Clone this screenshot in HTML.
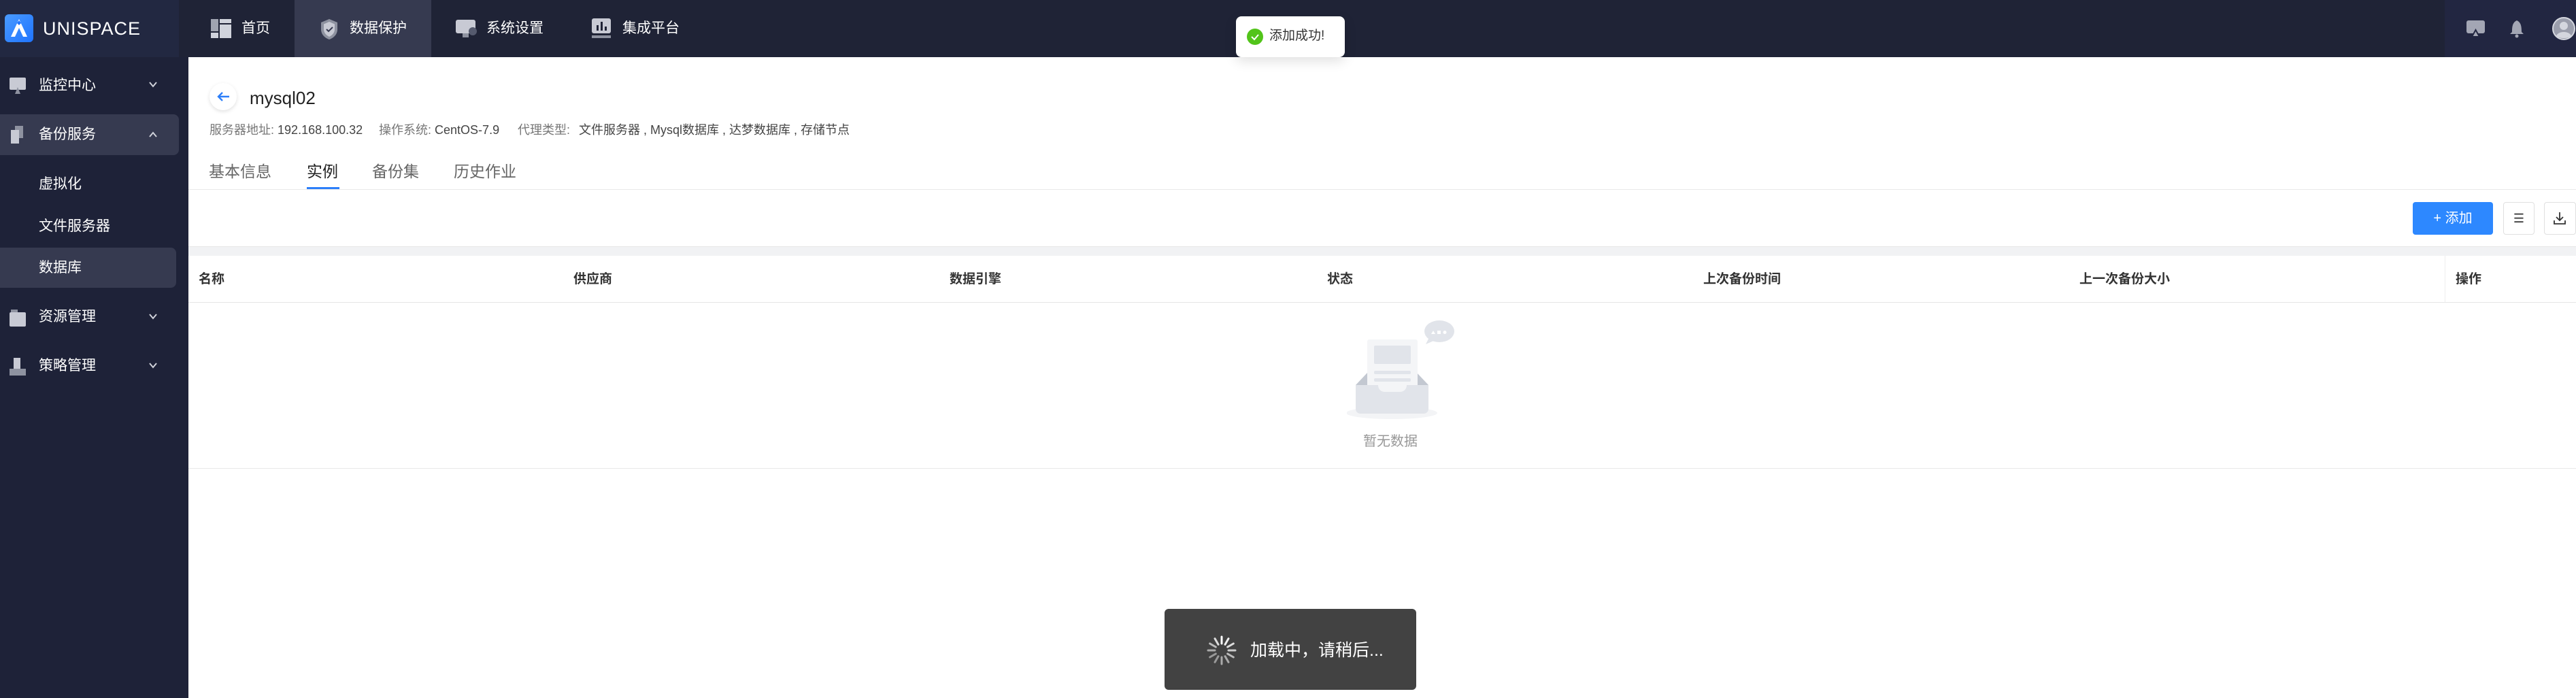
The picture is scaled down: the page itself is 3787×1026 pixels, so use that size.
<!DOCTYPE html>
<html><head><meta charset="utf-8">
<style>
*{margin:0;padding:0;box-sizing:border-box}
body{width:3787px;height:1026px;overflow:hidden;background:#fff;font-family:"Liberation Sans","Noto Sans CJK SC",sans-serif;position:relative}
.abs{position:absolute}
.top{left:0;top:0;width:3787px;height:84px;background:#1f2336}
.logo{left:0;top:0;width:263px;height:84px;background:#222841}
.side{left:0;top:84px;width:277px;height:942px;background:#1e2238}
.nav{color:#fff;font-size:21px;line-height:84px;top:0}
.si{color:#fff;font-size:21px;line-height:30px}
.hd{top:376px;font-size:19px;font-weight:bold;color:#333;line-height:69px}
.inf{top:180px;font-size:18px;line-height:22px;white-space:nowrap}
.lb{color:#777}.vl{color:#444}
</style></head><body>
<div class="abs top"></div>
<div class="abs logo"></div>
<div class="abs" style="left:7px;top:21px;width:42px;height:41px;border-radius:6px;background:linear-gradient(135deg,#4a9bff,#1f74ff)">
<svg width="42" height="41" viewBox="0 0 42 41"><path d="M21 7 L33 33 L27 33 L21 20 L15 33 L9 33 Z" fill="#fff"/><path d="M21 9 l3 4 -3 3 -3 -3z" fill="#1f74ff"/></svg></div>
<div class="abs" style="left:63px;top:24px;color:#fff;font-size:27px;line-height:36px;letter-spacing:1px">UNISPACE</div>
<div class="abs" style="left:433px;top:0;width:201px;height:84px;background:#363a50"></div>
<svg class="abs" style="left:310px;top:28px" width="30" height="28"><rect x="0" y="0" width="11" height="18" fill="#a0a4b0"/><rect x="0" y="20" width="11" height="8" fill="#d0d3dc"/><rect x="13" y="0" width="17" height="6" fill="#d0d3dc"/><rect x="13" y="8" width="17" height="20" fill="#d0d3dc"/></svg>
<div class="abs nav" style="left:355px">首页</div>
<svg class="abs" style="left:471px;top:27px" width="26" height="32"><path d="M13 1 L25 6 V16 C25 24 19 29 13 31 C7 29 1 24 1 16 V6 Z" fill="#8e92a0"/><path d="M13 5 L21 8.5 V16 C21 21.5 17 25 13 27 C9 25 5 21.5 5 16 V8.5Z" fill="#c8cad4"/><path d="M9 16 l3 3 6 -6" stroke="#363a50" stroke-width="2" fill="none"/></svg>
<div class="abs nav" style="left:514px">数据保护</div>
<svg class="abs" style="left:670px;top:29px" width="32" height="28"><rect x="0" y="0" width="29" height="20" rx="3" fill="#c8cad4"/><rect x="10" y="20" width="9" height="6" fill="#8e92a0"/><circle cx="25" cy="17" r="6" fill="#555a6e"/></svg>
<div class="abs nav" style="left:715px">系统设置</div>
<svg class="abs" style="left:870px;top:27px" width="28" height="30"><rect x="0" y="0" width="28" height="22" rx="3" fill="#c8cad4"/><rect x="7" y="10" width="3" height="8" fill="#1f2336"/><rect x="13" y="5" width="3" height="13" fill="#1f2336"/><rect x="19" y="12" width="3" height="6" fill="#1f2336"/><rect x="0" y="25" width="28" height="4" fill="#8e92a0"/></svg>
<div class="abs nav" style="left:915px">集成平台</div>
<div class="abs" style="left:3594px;top:0;width:193px;height:84px;background:#222641"></div>
<svg class="abs" style="left:3626px;top:30px" width="27" height="25"><rect x="0" y="0" width="27" height="19" rx="3" fill="#a3a6b4"/><path d="M13.5 14 L19 24 H8Z" fill="#a3a6b4" stroke="#222641" stroke-width="2"/></svg>
<svg class="abs" style="left:3689px;top:29px" width="22" height="27"><path d="M11 1 C5 4 4 9 4 18 L1 21 H21 L18 18 C18 9 17 4 11 1Z" fill="#a3a6b4"/><circle cx="11" cy="24" r="2.5" fill="#a3a6b4"/></svg>
<svg class="abs" style="left:3752px;top:25px" width="34" height="34"><circle cx="17" cy="17" r="16" fill="#9b9eac" stroke="#d4d6de" stroke-width="2"/><circle cx="17" cy="13" r="6" fill="#d4d6de"/><path d="M6 28 C8 20 26 20 28 28 C24 32 10 32 6 28Z" fill="#d4d6de"/></svg>

<div class="abs side"></div>
<div class="abs" style="left:0;top:168px;width:263px;height:60px;background:#363a50;border-radius:0 8px 8px 0"></div>
<div class="abs" style="left:0;top:364px;width:259px;height:59px;background:#363a50;border-radius:0 8px 8px 0"></div>
<svg class="abs" style="left:14px;top:114px" width="26" height="26"><rect x="0" y="0" width="24" height="18" rx="2" fill="#c8cad4"/><path d="M12 14 L16 24 H8Z" fill="#8e92a0"/></svg>
<div class="abs si" style="left:57px;top:111px">监控中心</div>
<svg class="abs" style="left:219px;top:119px" width="12" height="10"><path d="M1 2 L6 8 L11 2" stroke="#d0d2da" stroke-width="2" fill="none"/></svg>
<svg class="abs" style="left:14px;top:185px" width="26" height="26"><rect x="8" y="0" width="12" height="18" fill="#8e92a0"/><rect x="2" y="6" width="12" height="20" fill="#c8cad4"/></svg>
<div class="abs si" style="left:57px;top:183px">备份服务</div>
<svg class="abs" style="left:219px;top:193px" width="12" height="10"><path d="M1 8 L6 2 L11 8" stroke="#d0d2da" stroke-width="2" fill="none"/></svg>
<div class="abs si" style="left:57px;top:256px">虚拟化</div>
<div class="abs si" style="left:57px;top:318px">文件服务器</div>
<div class="abs si" style="left:57px;top:379px">数据库</div>
<svg class="abs" style="left:14px;top:455px" width="26" height="26"><rect x="2" y="0" width="10" height="6" fill="#8e92a0"/><rect x="0" y="4" width="24" height="21" rx="2" fill="#c8cad4"/></svg>
<div class="abs si" style="left:57px;top:451px">资源管理</div>
<svg class="abs" style="left:219px;top:460px" width="12" height="10"><path d="M1 2 L6 8 L11 2" stroke="#d0d2da" stroke-width="2" fill="none"/></svg>
<svg class="abs" style="left:14px;top:526px" width="26" height="26"><rect x="6" y="0" width="10" height="18" fill="#c8cad4"/><rect x="0" y="16" width="24" height="10" fill="#8e92a0"/></svg>
<div class="abs si" style="left:57px;top:523px">策略管理</div>
<svg class="abs" style="left:219px;top:532px" width="12" height="10"><path d="M1 2 L6 8 L11 2" stroke="#d0d2da" stroke-width="2" fill="none"/></svg>

<div class="abs" style="left:308px;top:122px;width:40px;height:40px;border-radius:50%;background:#fff;box-shadow:0 2px 6px rgba(0,0,0,.12)"></div>
<svg class="abs" style="left:318px;top:134px" width="20" height="16"><path d="M19 8 H3 M9 2 L3 8 L9 14" stroke="#2d7ff9" stroke-width="2.4" fill="none"/></svg>
<div class="abs" style="left:367px;top:128px;font-size:26px;color:#222;line-height:32px">mysql02</div>
<div class="abs inf" style="left:308px"><span class="lb">服务器地址:</span> <span class="vl">192.168.100.32</span></div>
<div class="abs inf" style="left:557px"><span class="lb">操作系统:</span> <span class="vl">CentOS-7.9</span></div>
<div class="abs inf" style="left:761px"><span class="lb">代理类型:</span></div>
<div class="abs inf" style="left:851px"><span class="vl">文件服务器 , Mysql数据库 , 达梦数据库 , 存储节点</span></div>
<div class="abs" style="left:307px;top:236px;font-size:23px;color:#666;line-height:32px;white-space:nowrap">基本信息</div>
<div class="abs" style="left:451px;top:236px;font-size:23px;color:#222;line-height:32px">实例</div>
<div class="abs" style="left:547px;top:236px;font-size:23px;color:#666;line-height:32px">备份集</div>
<div class="abs" style="left:667px;top:236px;font-size:23px;color:#666;line-height:32px">历史作业</div>
<div class="abs" style="left:451px;top:275px;width:48px;height:3px;background:#2d7ff9"></div>
<div class="abs" style="left:277px;top:278px;width:3510px;height:1px;background:#e8e8e8"></div>

<div class="abs" style="left:3547px;top:297px;width:118px;height:48px;border-radius:4px;background:#2d88ff;color:#fff;font-size:20px;line-height:48px;text-align:center">+ 添加</div>
<div class="abs" style="left:3680px;top:297px;width:46px;height:48px;border:1px solid #e0e0e0;border-radius:4px;text-align:center;line-height:46px;font-size:18px;color:#333">☰</div>
<div class="abs" style="left:3740px;top:297px;width:47px;height:48px;border:1px solid #e0e0e0;border-radius:4px"></div>
<svg class="abs" style="left:3754px;top:311px" width="18" height="20"><path d="M9 1 V13 M4 8 L9 13 L14 8 M1 13 V18 H17 V13" stroke="#333" stroke-width="1.8" fill="none"/></svg>

<div class="abs" style="left:277px;top:362px;width:3510px;height:14px;background:#f1f2f4;border-top:1px solid #e6e6e6"></div>
<div class="abs" style="left:277px;top:444px;width:3510px;height:1px;background:#e6e6e6"></div>
<div class="abs" style="left:3594px;top:376px;width:1px;height:68px;background:#eee"></div>
<div class="abs hd" style="left:292px">名称</div>
<div class="abs hd" style="left:843px">供应商</div>
<div class="abs hd" style="left:1396px">数据引擎</div>
<div class="abs hd" style="left:1951px">状态</div>
<div class="abs hd" style="left:2504px">上次备份时间</div>
<div class="abs hd" style="left:3057px">上一次备份大小</div>
<div class="abs hd" style="left:3610px">操作</div>

<svg class="abs" style="left:1980px;top:468px" width="160" height="150" viewBox="0 0 160 150">
<ellipse cx="66" cy="139" rx="67" ry="9" fill="#f3f4f6"/>
<path d="M13 98 L30 80 H103 L120 98Z" fill="#c3c8d1"/>
<rect x="30" y="31" width="74" height="90" rx="3" fill="#f4f5f7"/>
<rect x="40" y="40" width="54" height="27" rx="2" fill="#e1e4ea"/>
<rect x="40" y="77" width="54" height="5" rx="2" fill="#e1e4ea"/>
<rect x="40" y="88" width="54" height="5" rx="2" fill="#e1e4ea"/>
<path d="M13 98 H46 C46 104 50 108 56 108 H78 C84 108 88 104 88 98 H120 V133 C120 137 117 140 113 140 H20 C16 140 13 137 13 133Z" fill="#e1e4ea"/>
<ellipse cx="136" cy="19" rx="22" ry="16" fill="#e1e4ea"/>
<path d="M121 28 L116 38 L130 32Z" fill="#e1e4ea"/>
<path d="M124 23 l3 -5 3 5z" fill="#fff"/><rect x="133" y="18" width="5" height="5" fill="#fff"/><circle cx="144" cy="20.5" r="2.5" fill="#fff"/>
</svg>
<div class="abs" style="left:2004px;top:636px;font-size:20px;color:#999;line-height:26px">暂无数据</div>
<div class="abs" style="left:277px;top:688px;width:3510px;height:1px;background:#e8e8e8"></div>

<div class="abs" style="left:1817px;top:24px;width:160px;height:60px;background:#fff;border-radius:8px;box-shadow:0 6px 18px rgba(0,0,0,.12)"></div>
<svg class="abs" style="left:1833px;top:42px" width="24" height="24"><circle cx="12" cy="12" r="12" fill="#52c41a"/><path d="M7 12 l4 4 6 -7" stroke="#fff" stroke-width="2" fill="none"/></svg>
<div class="abs" style="left:1866px;top:40px;font-size:19px;color:#333;line-height:26px">添加成功!</div>

<div class="abs" style="left:1712px;top:895px;width:370px;height:119px;background:#424242;border-radius:6px"></div>
<svg class="abs" style="left:1772px;top:932px" width="48" height="48" viewBox="0 0 48 48">
<g stroke-width="3" stroke-linecap="round">
<line x1="24" y1="4" x2="24" y2="14" stroke="#fff" transform="rotate(0 24 24)"/>
<line x1="24" y1="4" x2="24" y2="14" stroke="#eee" transform="rotate(30 24 24)"/>
<line x1="24" y1="4" x2="24" y2="14" stroke="#ddd" transform="rotate(60 24 24)"/>
<line x1="24" y1="4" x2="24" y2="14" stroke="#ccc" transform="rotate(90 24 24)"/>
<line x1="24" y1="4" x2="24" y2="14" stroke="#bbb" transform="rotate(120 24 24)"/>
<line x1="24" y1="4" x2="24" y2="14" stroke="#aaa" transform="rotate(150 24 24)"/>
<line x1="24" y1="4" x2="24" y2="14" stroke="#aaa" transform="rotate(180 24 24)"/>
<line x1="24" y1="4" x2="24" y2="14" stroke="#999" transform="rotate(210 24 24)"/>
<line x1="24" y1="4" x2="24" y2="14" stroke="#999" transform="rotate(240 24 24)"/>
<line x1="24" y1="4" x2="24" y2="14" stroke="#aaa" transform="rotate(270 24 24)"/>
<line x1="24" y1="4" x2="24" y2="14" stroke="#bbb" transform="rotate(300 24 24)"/>
<line x1="24" y1="4" x2="24" y2="14" stroke="#ddd" transform="rotate(330 24 24)"/>
</g></svg>
<div class="abs" style="left:1838px;top:939px;font-size:25px;color:#fff;line-height:34px;white-space:nowrap">加载中，请稍后...</div>
</body></html>
